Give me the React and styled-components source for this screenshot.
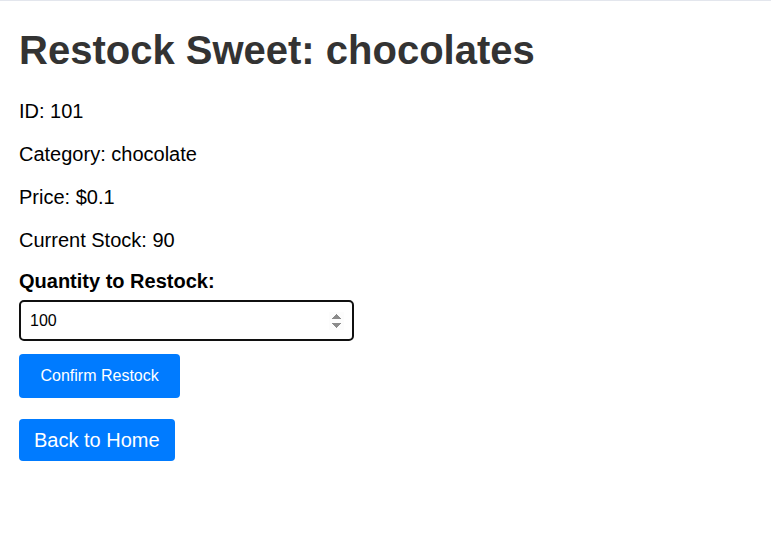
import React, { useState } from "react";
import styled, { createGlobalStyle } from "styled-components";

const Global = createGlobalStyle`
  html, body { margin: 0; padding: 0; background: #fff; }
  body { font-family: "Liberation Sans", Arial, sans-serif; color: #000; }
  * { box-sizing: border-box; }
`;

const TopRule = styled.div`
  height: 1px;
  background: #e3e6ed;
`;

const Page = styled.main`
  padding: 0 20px 20px 19px;
  display: flex;
  flex-direction: column;
  align-items: flex-start;
`;

const Title = styled.h1`
  margin: 26px 0 27px;
  font-size: 40px;
  line-height: 46px;
  font-weight: 700;
  color: #333;
`;

const Info = styled.p`
  margin: 0 0 20px;
  font-size: 20px;
  line-height: 23px;
`;

const Label = styled.label`
  display: block;
  margin: -2px 0 7px;
  font-size: 20px;
  line-height: 23px;
  font-weight: 700;
`;

const QtyInput = styled.input`
  width: 335px;
  height: 41px;
  padding: 0 8px 0 9px;
  border: 2px solid #101010;
  border-radius: 5px;
  font-family: "Liberation Sans", Arial, sans-serif;
  font-size: 16px;
  color: #000;
  outline: none;
  margin-bottom: 13px;
`;

const Button = styled.button`
  height: ${(p) => (p.$big ? "42px" : "44px")};
  padding: 0 ${(p) => (p.$big ? "15px" : "21.5px")};
  border: none;
  border-radius: 4px;
  background: #007bff;
  color: #fff;
  font-family: "Liberation Sans", Arial, sans-serif;
  font-size: ${(p) => (p.$big ? "20px" : "16px")};
  cursor: pointer;
  margin-bottom: ${(p) => (p.$big ? "0" : "21px")};
`;

export default function App() {
  const [qty, setQty] = useState("100");
  return (
    <>
      <Global />
      <TopRule />
      <Page>
        <Title>Restock Sweet: chocolates</Title>
        <Info>ID: 101</Info>
        <Info>Category: chocolate</Info>
        <Info>Price: $0.1</Info>
        <Info>Current Stock: 90</Info>
        <Label htmlFor="qty">Quantity to Restock:</Label>
        <QtyInput
          id="qty"
          type="number"
          autoFocus
          value={qty}
          onChange={(e) => setQty(e.target.value)}
        />
        <Button>Confirm Restock</Button>
        <Button $big>Back to Home</Button>
      </Page>
    </>
  );
}
